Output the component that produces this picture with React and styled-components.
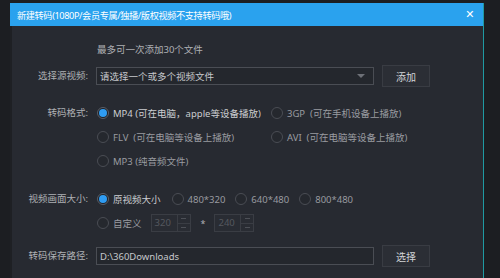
import React from 'react';
import styled, { createGlobalStyle } from 'styled-components';

const Global = createGlobalStyle`
  html, body {
    margin: 0;
    padding: 0;
    background: #1c1e22;
    font-family: "Noto Sans", "Noto Sans CJK SC", sans-serif;
    font-size: 9.5px;
    overflow: hidden;
  }
`;

const Screen = styled.div`
  width: 500px;
  height: 278px;
  padding-top: 3px;
  box-sizing: border-box;
`;

const Dialog = styled.div`
  margin-left: 10px;
  width: 474px;
  height: 275px;
  display: flex;
  flex-direction: column;
  background: #272a31;
  border-right: 1px solid #1f9aa2;
  box-sizing: border-box;
`;

const TitleBar = styled.div`
  height: 23px;
  flex: none;
  background: #2aa2ee;
  display: flex;
  align-items: center;
  justify-content: space-between;
  padding: 0 9px 0 7px;
  color: #ffffff;
  font-size: 9.2px;
  letter-spacing: -0.4px;
`;

const Close = styled.span`
  font-family: "DejaVu Sans", sans-serif;
  font-size: 11px;
  font-weight: bold;
`;

const Body = styled.div`
  flex: 1;
  border-left: 2px solid #1e2024;
  padding-top: 16px;
`;

const Row = styled.div`
  display: flex;
  align-items: ${p => (p.$top ? 'flex-start' : 'center')};
  height: ${p => p.$h || 24}px;
  margin-top: ${p => p.$gap || 0}px;
`;

const Label = styled.div`
  width: 84px;
  flex: none;
  box-sizing: border-box;
  padding-right: 8px;
  text-align: right;
  color: #aeb0b4;
  line-height: 24px;
`;

const Note = styled.div`
  color: #aeb0b4;
  padding-left: 85px;
  height: 16px;
  line-height: 16px;
`;

const Field = styled.div`
  width: 278px;
  height: 18px;
  box-sizing: border-box;
  border: 1px solid #4a4d54;
  background: #24272d;
  display: flex;
  align-items: center;
  justify-content: space-between;
  padding: 0 8px 0 3px;
  color: #c6c8cb;
`;

const Caret = styled.span`
  width: 0;
  height: 0;
  border-left: 4px solid transparent;
  border-right: 4px solid transparent;
  border-top: 4px solid #6d7077;
`;

const Button = styled.button`
  margin-left: 8px;
  width: 48px;
  height: 22px;
  background: #2b2e35;
  border: 1px solid #393c43;
  color: #d2d4d7;
  font-family: inherit;
  font-size: 10px;
  padding: 0;
`;

const Options = styled.div`
  display: grid;
  grid-template-columns: 174px auto;
  grid-auto-rows: 24px;
  align-items: center;
`;

const Option = styled.label`
  display: flex;
  align-items: center;
  gap: 4px;
  margin-left: 1px;
  margin-right: ${p => p.$mr || 0}px;
  color: ${p => (p.$on ? '#cbcdd0' : '#999ba0')};
  white-space: pre;
`;

const Radio = styled.span`
  width: 12px;
  height: 12px;
  box-sizing: border-box;
  border-radius: 50%;
  border: 1px solid ${p => (p.$on ? '#5b5f68' : '#4a4d54')};
  background: ${p => (p.$on ? '#1d2026' : '#25282e')};
  display: flex;
  align-items: center;
  justify-content: center;
  &::after {
    content: '';
    width: 8px;
    height: 8px;
    border-radius: 50%;
    background: ${p => (p.$on ? '#2f9cf2' : 'transparent')};
  }
`;

const Inline = styled.div`
  display: flex;
  align-items: center;
`;

const Spin = styled.div`
  margin-left: 9px;
  width: 40px;
  height: 18px;
  box-sizing: border-box;
  border: 1px solid #3a3d44;
  background: #292c33;
  display: flex;
  color: #55585f;
`;

const SpinValue = styled.span`
  flex: 1;
  line-height: 16px;
  padding-left: 3px;
`;

const SpinArrows = styled.span`
  width: 12px;
  border-left: 1px solid #3a3d44;
  display: flex;
  flex-direction: column;
  span {
    flex: 1;
    display: flex;
    align-items: center;
    justify-content: center;
  }
  span + span {
    border-top: 1px solid #3a3d44;
  }
  i {
    width: 5px;
    height: 1px;
    background: #4d5057;
  }
`;

const Star = styled.span`
  margin-left: 10px;
  margin-right: 0;
  color: #aeb0b4;
  font-size: 9px;
`;

const formats = [
  ['MP4 (可在电脑，apple等设备播放)', true],
  ['3GP  (可在手机设备上播放)', false],
  ['FLV  (可在电脑等设备上播放)', false],
  ['AVI  (可在电脑等设备上播放)', false],
  ['MP3 (纯音频文件)', false],
];

const sizes = [
  ['原视频大小', true, 10],
  ['480*320', false, 9],
  ['640*480', false, 9],
  ['800*480', false, 0],
];

export default function App() {
  return (
    <Screen>
      <Global />
      <Dialog>
        <TitleBar>
          <span>新建转码(1080P/会员专属/独播/版权视频不支持转码哦)</span>
          <Close>✕</Close>
        </TitleBar>
        <Body>
          <Note>最多可一次添加30个文件</Note>
          <Row $h={22} $gap={7}>
            <Label>选择源视频:</Label>
            <Field>
              <span>请选择一个或多个视频文件</span>
              <Caret />
            </Field>
            <Button>添加</Button>
          </Row>
          <Row $h={72} $gap={14} $top>
            <Label>转码格式:</Label>
            <Options>
              {formats.map(([text, on]) => (
                <Option key={text} $on={on}>
                  <Radio $on={on} />
                  {text}
                </Option>
              ))}
            </Options>
          </Row>
          <Row $gap={14}>
            <Label>视频画面大小:</Label>
            <Inline>
              {sizes.map(([text, on, mr]) => (
                <Option key={text} $on={on} $mr={mr}>
                  <Radio $on={on} />
                  {text}
                </Option>
              ))}
            </Inline>
          </Row>
          <Row>
            <Label />
            <Inline>
              <Option>
                <Radio />
                自定义
              </Option>
              <Spin>
                <SpinValue>320</SpinValue>
                <SpinArrows><span><i /></span><span><i /></span></SpinArrows>
              </Spin>
              <Star>*</Star>
              <Spin>
                <SpinValue>240</SpinValue>
                <SpinArrows><span><i /></span><span><i /></span></SpinArrows>
              </Spin>
            </Inline>
          </Row>
          <Row $h={22} $gap={10}>
            <Label>转码保存路径:</Label>
            <Field>
              <span>D:\360Downloads</span>
            </Field>
            <Button>选择</Button>
          </Row>
        </Body>
      </Dialog>
    </Screen>
  );
}
